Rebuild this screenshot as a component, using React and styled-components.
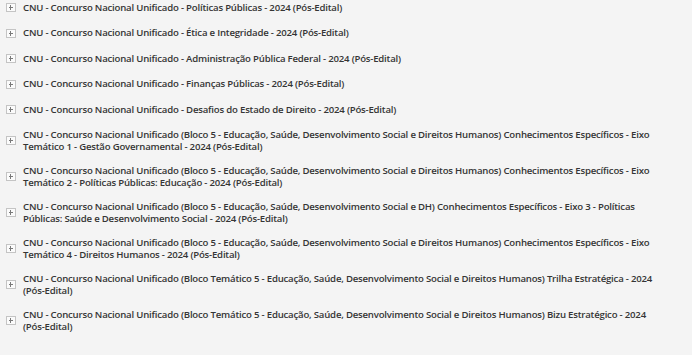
import React from 'react';
import styled, { createGlobalStyle } from 'styled-components';

const GlobalStyle = createGlobalStyle`
    html, body {
        margin: 0;
        padding: 0;
        background: #f4f4f4;
    }
`;

const List = styled.ul`
    list-style: none;
    margin: -5px 0 0 0;
    padding: 0 32px 0 6px;
    width: 692px;
    box-sizing: border-box;
    font-family: "Open Sans", "Liberation Sans", sans-serif;
    font-weight: 600;
    font-size: 9.6px;
    letter-spacing: -0.2px;
    color: #353535;
`;

const Item = styled.li`
    display: flex;
    align-items: center;
    gap: 7px;
    padding: 6px 0;
`;

const Toggle = styled.span`
    flex: none;
    width: 10px;
    height: 9px;
    border: 1px solid #c4c4c4;
    box-sizing: border-box;
    position: relative;
    background: #fbfbfb;

    &::before, &::after {
        content: '';
        position: absolute;
        background: #7a7a7a;
    }
    &::before {
        left: 2px;
        width: 4px;
        top: 3px;
        height: 1px;
    }
    &::after {
        top: 1px;
        height: 5px;
        left: 3px;
        width: 1px;
    }
`;

const Title = styled.span`
    flex: 1;
    line-height: 12px;
    min-height: 13.5px;
    display: flex;
    align-items: center;
`;

const items = [
    'CNU - Concurso Nacional Unificado - Políticas Públicas - 2024 (Pós-Edital)',
    'CNU - Concurso Nacional Unificado - Ética e Integridade - 2024 (Pós-Edital)',
    'CNU - Concurso Nacional Unificado - Administração Pública Federal - 2024 (Pós-Edital)',
    'CNU - Concurso Nacional Unificado - Finanças Públicas - 2024 (Pós-Edital)',
    'CNU - Concurso Nacional Unificado - Desafios do Estado de Direito - 2024 (Pós-Edital)',
    'CNU - Concurso Nacional Unificado (Bloco 5 - Educação, Saúde, Desenvolvimento Social e Direitos Humanos) Conhecimentos Específicos - Eixo Temático 1 - Gestão Governamental - 2024 (Pós-Edital)',
    'CNU - Concurso Nacional Unificado (Bloco 5 - Educação, Saúde, Desenvolvimento Social e Direitos Humanos) Conhecimentos Específicos - Eixo Temático 2 - Políticas Públicas: Educação - 2024 (Pós-Edital)',
    'CNU - Concurso Nacional Unificado (Bloco 5 - Educação, Saúde, Desenvolvimento Social e DH) Conhecimentos Específicos - Eixo 3 - Políticas Públicas: Saúde e Desenvolvimento Social - 2024 (Pós-Edital)',
    'CNU - Concurso Nacional Unificado (Bloco 5 - Educação, Saúde, Desenvolvimento Social e Direitos Humanos) Conhecimentos Específicos - Eixo Temático 4 - Direitos Humanos - 2024 (Pós-Edital)',
    'CNU - Concurso Nacional Unificado (Bloco Temático 5 - Educação, Saúde, Desenvolvimento Social e Direitos Humanos) Trilha Estratégica - 2024 (Pós-Edital)',
    'CNU - Concurso Nacional Unificado (Bloco Temático 5 - Educação, Saúde, Desenvolvimento Social e Direitos Humanos) Bizu Estratégico - 2024 (Pós-Edital)',
];

export default function App() {
    return (
        <>
            <GlobalStyle />
            <List>
                {items.map((text, i) => (
                    <Item key={i}>
                        <Toggle />
                        <Title><span>{text}</span></Title>
                    </Item>
                ))}
            </List>
        </>
    );
}
